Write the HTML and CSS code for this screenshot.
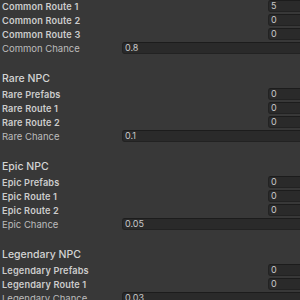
FILE: index.html
```html
<!DOCTYPE html>
<html lang="en">
<head>
    <meta charset="UTF-8">
    <meta name="viewport" content="width=device-width, initial-scale=1.0">
    <title>NPC Spawner</title>

    <link rel="stylesheet" href="styles.css">

</head>
<body>

    <div class="inspector">

        <div class="section">
            <div class="row">
                <span class="label bold">Common Route 1</span>
                <span class="field size">5</span>
            </div>
            <div class="row">
                <span class="label bold">Common Route 2</span>
                <span class="field size">0</span>
            </div>
            <div class="row">
                <span class="label bold">Common Route 3</span>
                <span class="field size">0</span>
            </div>
            <div class="row">
                <span class="label">Common Chance</span>
                <span class="field wide">0.8</span>
            </div>
        </div>

        <div class="section">
            <h3 class="header">Rare NPC</h3>
            <div class="row">
                <span class="label bold">Rare Prefabs</span>
                <span class="field size">0</span>
            </div>
            <div class="row">
                <span class="label bold">Rare Route 1</span>
                <span class="field size">0</span>
            </div>
            <div class="row">
                <span class="label bold">Rare Route 2</span>
                <span class="field size">0</span>
            </div>
            <div class="row">
                <span class="label">Rare Chance</span>
                <span class="field wide">0.1</span>
            </div>
        </div>

        <div class="section">
            <h3 class="header">Epic NPC</h3>
            <div class="row">
                <span class="label bold">Epic Prefabs</span>
                <span class="field size">0</span>
            </div>
            <div class="row">
                <span class="label bold">Epic Route 1</span>
                <span class="field size">0</span>
            </div>
            <div class="row">
                <span class="label bold">Epic Route 2</span>
                <span class="field size">0</span>
            </div>
            <div class="row">
                <span class="label">Epic Chance</span>
                <span class="field wide">0.05</span>
            </div>
        </div>

        <div class="section">
            <h3 class="header">Legendary NPC</h3>
            <div class="row">
                <span class="label bold">Legendary Prefabs</span>
                <span class="field size">0</span>
            </div>
            <div class="row">
                <span class="label bold">Legendary Route 1</span>
                <span class="field size">0</span>
            </div>
            <div class="row">
                <span class="label">Legendary Chance</span>
                <span class="field wide">0.03</span>
            </div>
        </div>

    </div>

</body>
</html>
```

FILE: styles.css
```css
html, body {
    margin: 0;
    padding: 0;
    background: #383838;
    overflow: hidden;
}
.inspector {
    width: 300px;
    padding-left: 2px;
    font-family: Inter, "Noto Sans", sans-serif;
    color: #c4c4c4;
}
.header {
    margin: 0;
    padding-top: 16px;
    height: 32px;
    box-sizing: border-box;
    font-size: 10.5px;
    line-height: 14px;
    font-weight: 500;
    color: #d4d4d4;
}
.row {
    display: flex;
    align-items: flex-start;
    height: 14px;
}
.label {
    font-size: 9.5px;
    line-height: 14px;
    white-space: nowrap;
    color: #bcbcbc;
}
.label.bold {
    font-size: 9.2px;
    font-weight: 600;
    letter-spacing: 0.15px;
    color: #cccccc;
}
.row .label {
    width: 120px;
    flex-shrink: 0;
}
.field {
    display: block;
    box-sizing: border-box;
    height: 12px;
    padding-left: 2px;
    background: #2a2a2a;
    border: 1px solid #222;
    border-top-color: #1c1c1c;
    border-radius: 3px;
    font-size: 9px;
    line-height: 10px;
    color: #c8c8c8;
}
.field.size {
    margin-left: 146px;
    width: 40px;
    flex-shrink: 0;
}
.field.wide {
    width: 190px;
    flex-shrink: 0;
}
```
